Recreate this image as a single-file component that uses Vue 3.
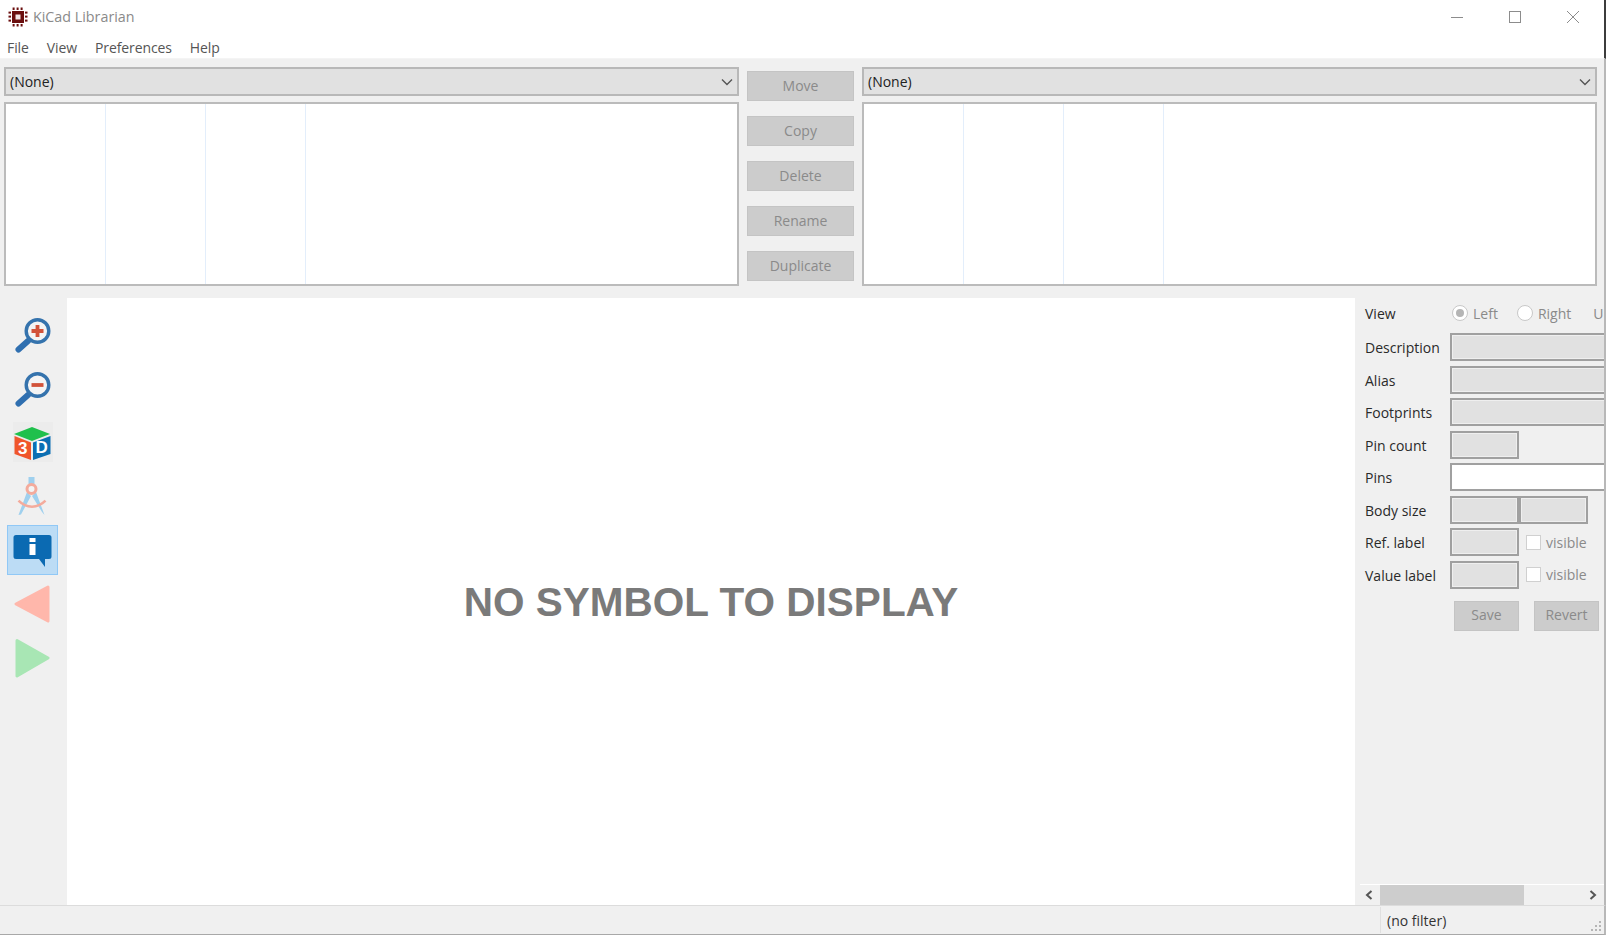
<template>
  <div class="window">
    <div class="titlebar">
      <svg class="app-icon" viewBox="0 0 20 20" width="20" height="20">
        <rect x="4" y="4" width="12" height="12" fill="#6b0f0f" />
        <rect x="7.500" y="7.500" width="5" height="5" fill="#f3e6e6" />
        <g fill="#6b0f0f">
          <rect v-for="n in 3" :key="'t' + n" :x="n * 4 + 0.6" y="0.5" width="2" height="2.5" />
          <rect v-for="n in 3" :key="'b' + n" :x="n * 4 + 0.6" y="17" width="2" height="2.5" />
          <rect v-for="n in 3" :key="'l' + n" x="0.5" :y="n * 4 + 0.6" width="2.5" height="2" />
          <rect v-for="n in 3" :key="'r' + n" x="17" :y="n * 4 + 0.6" width="2.5" height="2" />
        </g>
      </svg>
      <span class="title-text">KiCad Librarian</span>
      <div class="win-controls">
        <svg viewBox="0 0 14 14" width="14" height="14"><path d="M1 7.500h12" stroke="#8c8c8c" fill="none" /></svg>
        <svg viewBox="0 0 14 14" width="14" height="14"><rect x="1.500" y="1.500" width="11" height="11" stroke="#8c8c8c" fill="none" /></svg>
        <svg viewBox="0 0 14 14" width="14" height="14"><path d="M1 1l12 12M13 1L1 13" stroke="#8c8c8c" fill="none" /></svg>
      </div>
    </div>

    <div class="menubar">
      <span v-for="m in menus" :key="m">{{ m }}</span>
    </div>

    <div class="libraries">
      <div class="lib-side">
        <div class="combo">
          <span>(None)</span>
          <svg viewBox="0 0 12 8" width="12" height="8"><path d="M1 1.500l5 5 5-5" stroke="#555" stroke-width="1.4" fill="none" /></svg>
        </div>
        <div class="list">
          <div v-for="c in 3" :key="c" class="list-col"></div>
        </div>
      </div>
      <div class="lib-actions">
        <button v-for="a in actions" :key="a" class="btn" disabled>{{ a }}</button>
      </div>
      <div class="lib-side">
        <div class="combo">
          <span>(None)</span>
          <svg viewBox="0 0 12 8" width="12" height="8"><path d="M1 1.500l5 5 5-5" stroke="#555" stroke-width="1.4" fill="none" /></svg>
        </div>
        <div class="list">
          <div v-for="c in 3" :key="c" class="list-col"></div>
        </div>
      </div>
    </div>

    <div class="workspace">
      <div class="toolbar">
        <div class="tool">
          <svg viewBox="0 0 40 40" width="40" height="40">
            <path d="M15 27L5.500 35.500" stroke="#2f6fb0" stroke-width="6" stroke-linecap="round" />
            <circle cx="24.500" cy="17" r="11.300" fill="#f4f4f4" stroke="#3573ad" stroke-width="3.4" />
            <path d="M24.500 11v12M18.500 17h12" stroke="#d2533a" stroke-width="3.8" />
          </svg>
        </div>
        <div class="tool">
          <svg viewBox="0 0 40 40" width="40" height="40">
            <path d="M15 27L5.500 35.500" stroke="#2f6fb0" stroke-width="6" stroke-linecap="round" />
            <circle cx="24.500" cy="17" r="11.300" fill="#f4f4f4" stroke="#3573ad" stroke-width="3.4" />
            <path d="M18.500 17h12" stroke="#d2533a" stroke-width="3.8" />
          </svg>
        </div>
        <div class="tool">
          <svg viewBox="0 0 40 40" width="40" height="40">
            <rect width="40" height="40" fill="#ececec" />
            <path d="M19 5l18 7-18 7-18-7z" fill="#1fc04c" />
            <path d="M1.500 14L18 20.500V38L1.500 32z" fill="#f0562c" />
            <path d="M20 20.500L37.500 14v18L20 38z" fill="#0b6fb3" />
            <text x="9.700" y="32" class="cube-text" text-anchor="middle">3</text>
            <text x="28.700" y="31" class="cube-text" text-anchor="middle">D</text>
          </svg>
        </div>
        <div class="tool">
          <svg viewBox="0 0 40 40" width="40" height="40">
            <rect x="15.500" y="1" width="6" height="7" fill="#9fd0ee" />
            <path d="M14 16l4 4L8 38.500 5.500 39zM23 16l-4 4 10 16 2.500 3z" fill="#9fd0ee" />
            <path d="M5.500 24.700c8 8 19 8 27 0" stroke="#f4ab9c" stroke-width="2.6" fill="none" />
            <circle cx="18.500" cy="13" r="4.500" fill="#f4f4f4" stroke="#f4ab9c" stroke-width="3" />
          </svg>
        </div>
        <div class="tool active">
          <svg viewBox="0 0 40 40" width="40" height="40">
            <path d="M3 5h33a2.500 2.500 0 0 1 2.500 2.500v19a2.500 2.500 0 0 1-2.500 2.500h-4v8l-6-8H3a2.500 2.500 0 0 1-2.500-2.500v-19A2.500 2.500 0 0 1 3 5z" fill="#0b6ab2" />
            <path d="M16.500 8h6v4h-6zM16.500 14h6v11h-6z" fill="#fff" />
          </svg>
        </div>
        <div class="tool">
          <svg viewBox="0 0 40 40" width="40" height="40">
            <path d="M35 3L3 20l32 17z" fill="#ffb7ab" stroke="#ffb7ab" stroke-width="3" stroke-linejoin="round" />
          </svg>
        </div>
        <div class="tool">
          <svg viewBox="0 0 40 40" width="40" height="40">
            <path d="M4 2.500L35 20 4 38z" fill="#a8e6b4" stroke="#a8e6b4" stroke-width="3" stroke-linejoin="round" />
          </svg>
        </div>
      </div>

      <div class="canvas">NO SYMBOL TO DISPLAY</div>

      <div class="panel">
        <div class="panel-scroll">
          <div class="form">
            <div class="row view-row">
              <label>View</label>
              <div class="radios">
                <span class="radio checked"></span><span class="dim">Left</span>
                <span class="radio second"></span><span class="dim">Right</span>
                <span class="dim units">U</span>
              </div>
            </div>
            <div v-for="f in wideFields" :key="f" class="row">
              <label>{{ f }}</label>
              <div class="field wide"></div>
            </div>
            <div class="row">
              <label>Pin count</label>
              <div class="field"></div>
            </div>
            <div class="row">
              <label>Pins</label>
              <div class="field wide white"></div>
            </div>
            <div class="row body-row">
              <label>Body size</label>
              <div class="field"></div>
              <div class="field"></div>
            </div>
            <div v-for="f in labelFields" :key="f" class="row">
              <label>{{ f }}</label>
              <div class="field"></div>
              <span class="check"></span>
              <span class="dim">visible</span>
            </div>
            <div class="form-actions">
              <button class="btn small" disabled>Save</button>
              <button class="btn small" disabled>Revert</button>
            </div>
          </div>
        </div>
        <div class="hscroll">
          <svg viewBox="0 0 8 10" width="8" height="10"><path d="M6.500 1L2 5l4.500 4" stroke="#555" stroke-width="2" fill="none" /></svg>
          <div class="track"><div class="thumb"></div></div>
          <svg viewBox="0 0 8 10" width="8" height="10"><path d="M1.500 1L6 5 1.500 9" stroke="#555" stroke-width="2" fill="none" /></svg>
        </div>
      </div>
    </div>

    <div class="statusbar">
      <div class="status-cell">(no filter)</div>
      <svg class="grip" viewBox="0 0 12 12" width="12" height="12">
        <g fill="#b5b5b5">
          <rect x="9" y="1" width="2" height="2" />
          <rect x="5" y="5" width="2" height="2" />
          <rect x="9" y="5" width="2" height="2" />
          <rect x="1" y="9" width="2" height="2" />
          <rect x="5" y="9" width="2" height="2" />
          <rect x="9" y="9" width="2" height="2" />
        </g>
      </svg>
    </div>
  </div>
</template>

<script setup>
const menus = ['File', 'View', 'Preferences', 'Help']
const actions = ['Move', 'Copy', 'Delete', 'Rename', 'Duplicate']
const wideFields = ['Description', 'Alias', 'Footprints']
const labelFields = ['Ref. label', 'Value label']
</script>

<style>
html,
body {
  margin: 0;
  background: #f0f0f0;
  overflow: hidden;
}
</style>

<style scoped>
.window {
  width: 1606px;
  height: 935px;
  display: flex;
  flex-direction: column;
  background: #f0f0f0;
  font-family: "Open Sans", "Noto Sans", sans-serif;
  font-size: 14px;
  color: #333;
  overflow: hidden;
}

.titlebar {
  height: 33px;
  flex-shrink: 0;
  display: flex;
  align-items: center;
  background: #fff;
  padding-left: 8px;
  box-sizing: border-box;
  border-right: 2px solid #3c3c3c;
}

.title-text {
  margin-left: 5px;
  font-size: 14.3px;
  color: #8a8a8a;
}

.win-controls {
  margin-left: auto;
  display: flex;
  gap: 44px;
  padding-right: 24px;
}

.menubar {
  height: 26px;
  flex-shrink: 0;
  display: flex;
  align-items: center;
  gap: 18px;
  padding: 4px 0 0 7px;
  background: #fff;
  color: #555;
  letter-spacing: -0.1px;
  border-bottom: 1px solid #f4f4f4;
  border-right: 2px solid #3c3c3c;
  box-sizing: border-box;
}

.libraries {
  flex-shrink: 0;
  height: 239px;
  display: flex;
  padding: 8px 7px 0 4px;
  box-sizing: border-box;
  border-right: 2px solid #b8b8b8;
}

.lib-side {
  flex: 1;
  display: flex;
  flex-direction: column;
  gap: 6px;
}

.combo {
  height: 29px;
  display: flex;
  align-items: center;
  justify-content: space-between;
  padding: 0 4px;
  background: #e1e1e1;
  border: 2px solid #b8b8b8;
  box-sizing: border-box;
  color: #222;
}

.list {
  height: 184px;
  display: flex;
  background: #fff;
  border: 2px solid #bbbbbb;
  box-sizing: border-box;
  padding: 0;
}

.list-col {
  width: 100px;
  border-right: 1px solid #e3eefb;
  box-sizing: border-box;
}

.lib-actions {
  width: 107px;
  margin: 4px 8px 0;
  flex-shrink: 0;
  display: flex;
  flex-direction: column;
  gap: 15px;
}

.btn {
  height: 30px;
  background: #cccccc;
  border: 1px solid #c4c4c4;
  color: #8a8a8a;
  font-family: inherit;
  font-size: 14px;
  padding: 0 0 2px;
}

.workspace {
  flex: 1;
  min-height: 0;
  display: flex;
  border-right: 2px solid #b8b8b8;
}

.toolbar {
  width: 67px;
  flex-shrink: 0;
  padding: 11px 0 0 7px;
  box-sizing: border-box;
  display: flex;
  flex-direction: column;
  gap: 4px;
}

.tool {
  width: 51px;
  height: 50px;
  display: flex;
  align-items: center;
  justify-content: center;
  box-sizing: border-box;
}

.tool.active {
  background: #bcdcf5;
  border: 1px solid #90c8f6;
}

.cube-text {
  font-family: "Liberation Sans", sans-serif;
  font-weight: 700;
  font-size: 17px;
  fill: #fff;
}

.canvas {
  width: 1288px;
  flex-shrink: 0;
  display: flex;
  align-items: center;
  justify-content: center;
  padding-top: 2px;
  box-sizing: border-box;
  background: #fff;
  font-family: "Liberation Sans", sans-serif;
  font-weight: 700;
  font-size: 40.5px;
  color: #7a7a7a;
}

.panel {
  flex: 1;
  min-width: 0;
  display: flex;
  flex-direction: column;
}

.panel-scroll {
  flex: 1;
  min-height: 0;
  overflow: hidden;
  padding-left: 10px;
}

.form {
  width: 280px;
  padding-top: 3px;
}

.row {
  display: flex;
  align-items: center;
  height: 28px;
  margin-bottom: 4.5px;
  color: #2a2a2a;
}

.row label {
  width: 85px;
  flex-shrink: 0;
  padding-top: 1px;
}

.view-row {
  height: 24px;
  margin-bottom: 8px;
}

.radios {
  display: flex;
  align-items: center;
  padding-left: 2px;
}

.radio {
  width: 16px;
  height: 16px;
  border: 1px solid #c8c8c8;
  border-radius: 50%;
  background: #fff;
  box-sizing: border-box;
  margin-right: 5px;
  position: relative;
}

.radio.checked::after {
  content: "";
  position: absolute;
  inset: 3px;
  border-radius: 50%;
  background: #b5b5b5;
}

.radio.second {
  margin-left: 19px;
}

.units {
  margin-left: 22px;
}

.dim {
  color: #8a8a8a;
}

.field {
  width: 69px;
  height: 28px;
  flex-shrink: 0;
  background: #e1e1e1;
  border: 2px solid #a0a0a0;
  box-shadow: inset 0 0 0 1px #efefef;
  box-sizing: border-box;
}

.field.wide {
  width: 190px;
}

.field.white {
  background: #fff;
  box-shadow: none;
}

.check {
  width: 15px;
  height: 15px;
  margin: 0 5px 0 7px;
  background: #fff;
  border: 1px solid #d0d0d0;
  box-sizing: border-box;
  flex-shrink: 0;
}

.form-actions {
  display: flex;
  gap: 15px;
  margin: 12px 0 0 89px;
}

.btn.small {
  width: 65px;
}

.hscroll {
  height: 21px;
  flex-shrink: 0;
  display: flex;
  align-items: center;
  margin-left: 5px;
  border-top: 1px solid #fff;
  box-sizing: border-box;
  padding: 0 7px 0 5px;
  gap: 5px;
}

.track {
  flex: 1;
  height: 100%;
}

.thumb {
  width: 144px;
  height: 100%;
  margin-left: 2px;
  background: #cdcdcd;
}

.statusbar {
  height: 30px;
  flex-shrink: 0;
  display: flex;
  align-items: center;
  justify-content: flex-end;
  border-top: 1px solid #dcdcdc;
  border-bottom: 1px solid #a8a8a8;
  border-right: 2px solid #b8b8b8;
  box-sizing: border-box;
  position: relative;
}

.status-cell {
  width: 224px;
  height: 26px;
  line-height: 28px;
  padding-left: 6px;
  box-sizing: border-box;
  border-left: 1px solid #e0e0e0;
  color: #333;
}

.grip {
  position: absolute;
  right: 2px;
  bottom: 2px;
}
</style>
